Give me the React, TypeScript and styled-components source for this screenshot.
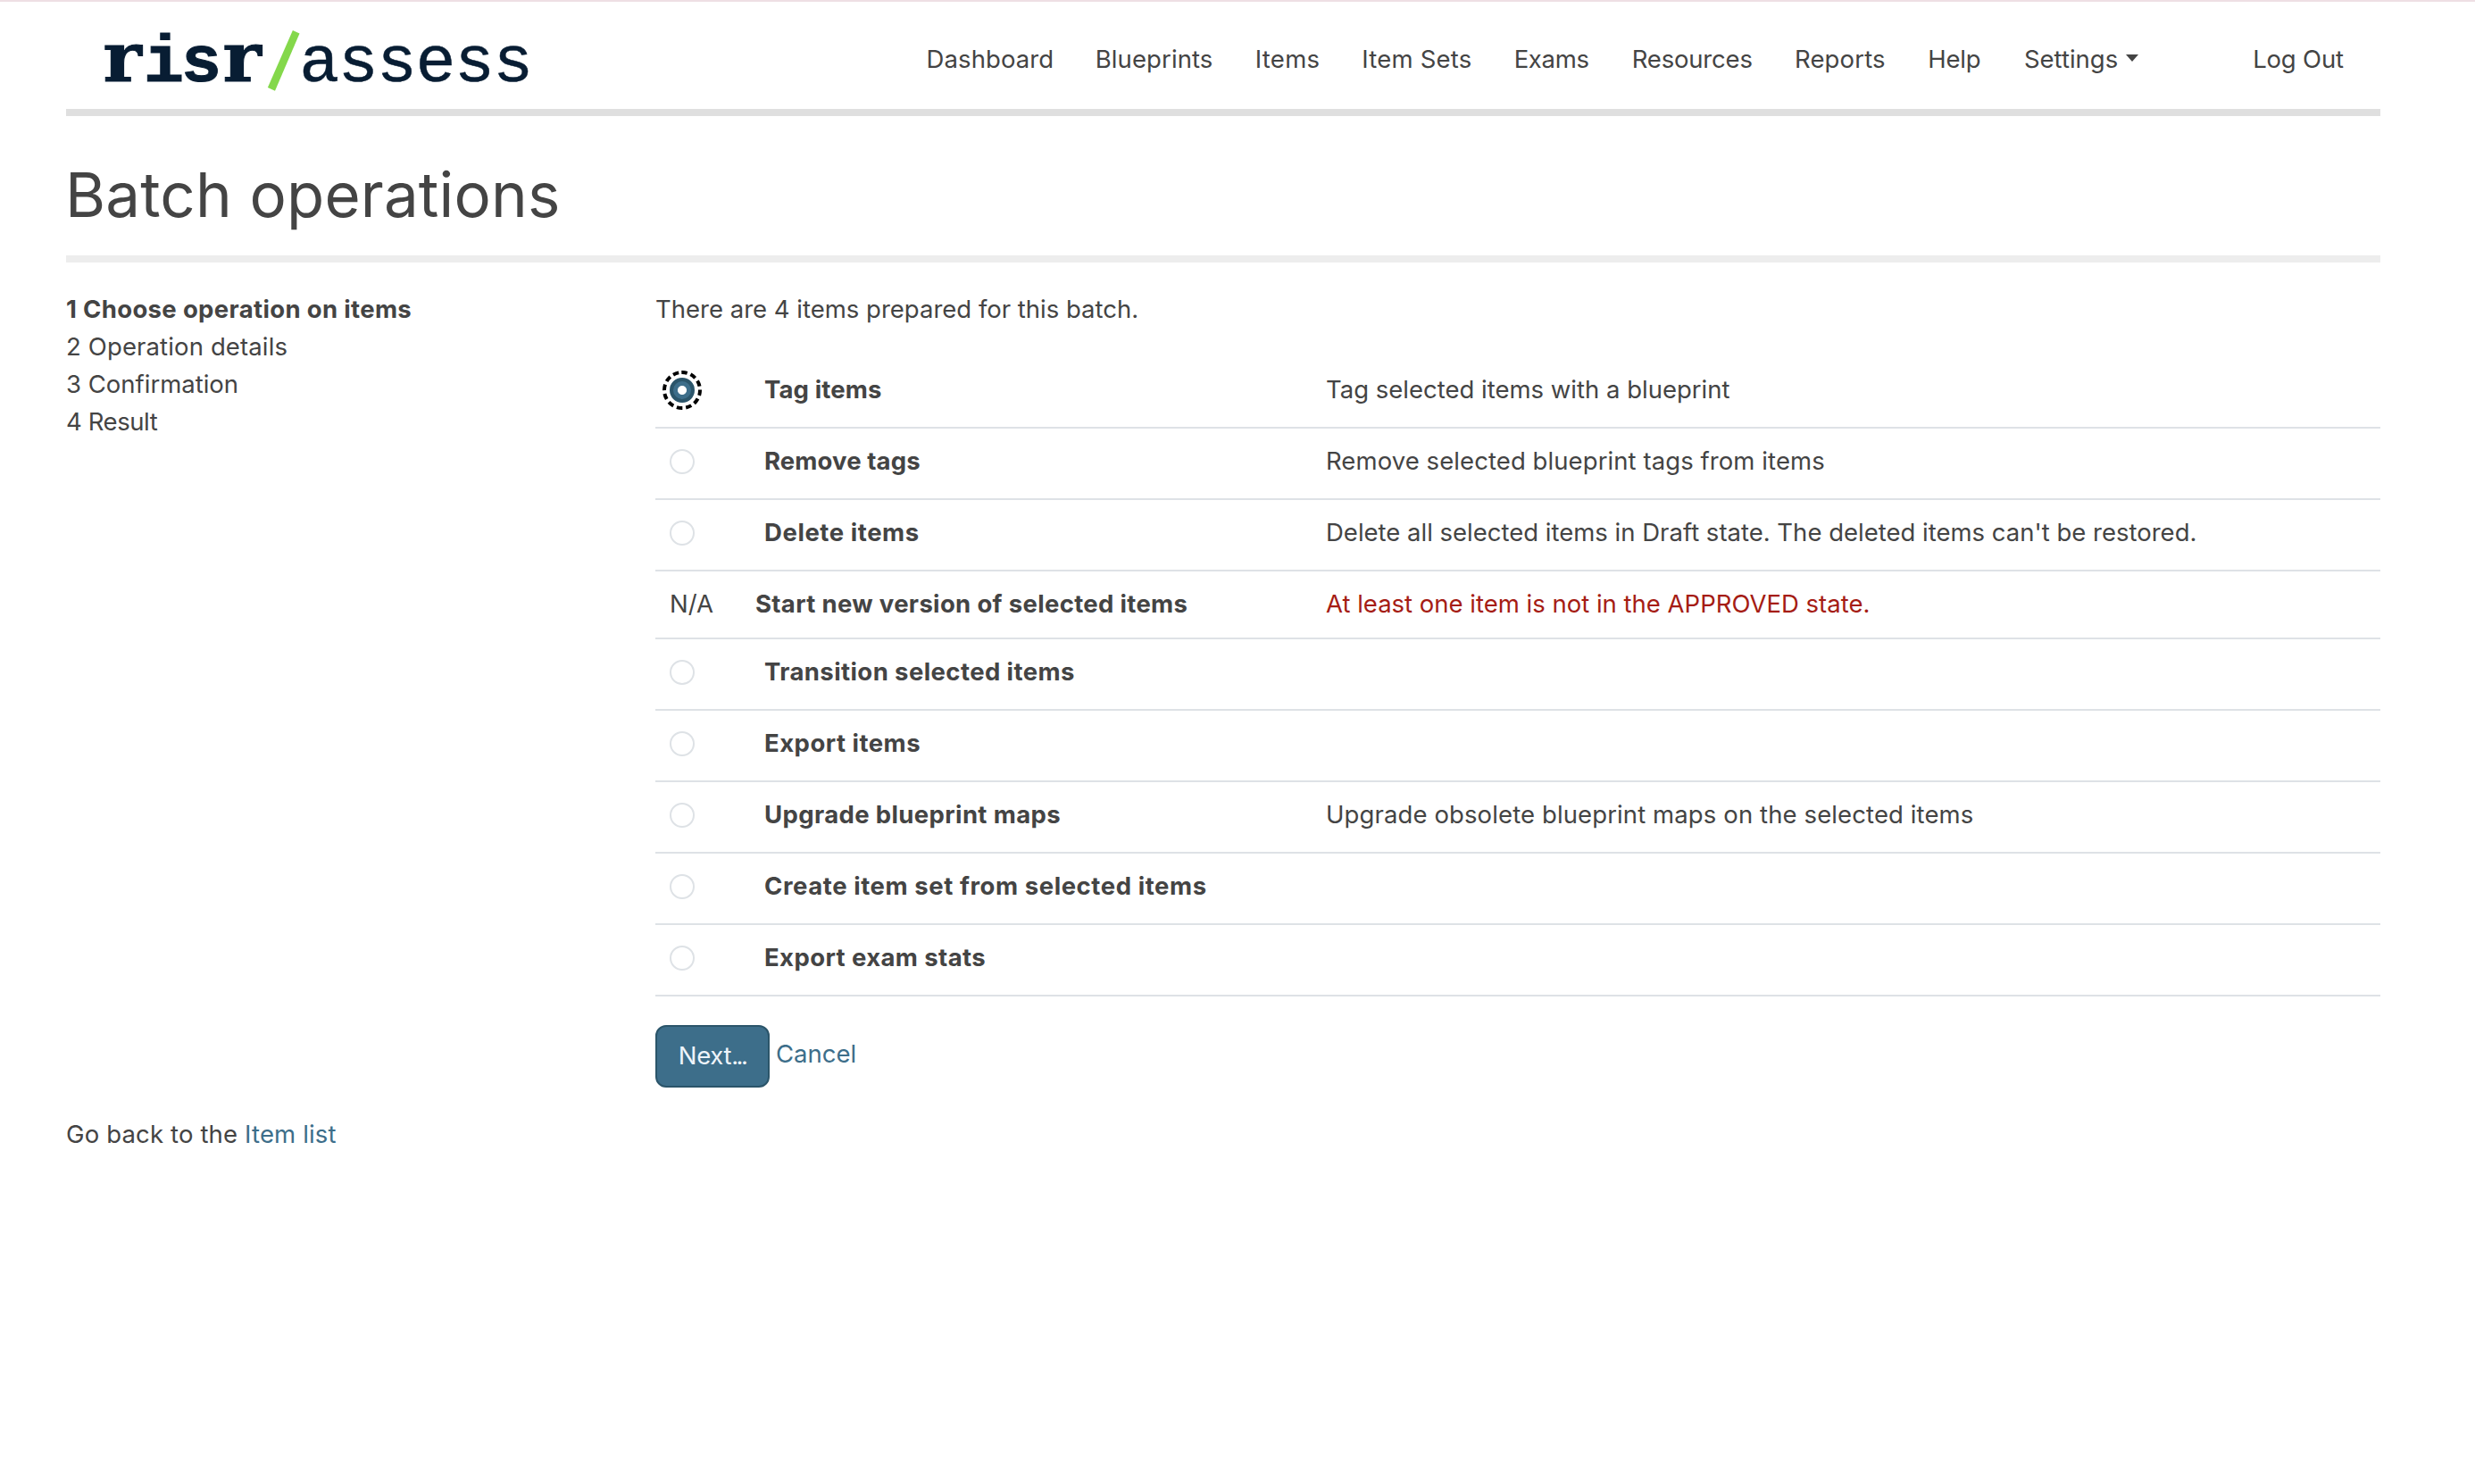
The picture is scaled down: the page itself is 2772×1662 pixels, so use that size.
import React, { useState } from "react";
import styled, { createGlobalStyle } from "styled-components";

const GlobalStyle = createGlobalStyle`
  *, *::before, *::after { box-sizing: border-box; }
  body {
    margin: 0;
    background: #fff;
    color: #444;
    font-family: Inter, "Liberation Sans", sans-serif;
    font-size: 27.5px;
    line-height: 42px;
  }
`;

const Page = styled.div`
  min-height: 1662px;
  border-top: 2px solid #eedfe4;
  padding: 0 106px 0 74px;
`;

const Header = styled.header`
  display: flex;
  height: 128px;
  border-bottom: 8px solid #dfdfdf;
`;

const Logo = styled.svg`
  flex: none;
  width: 560px;
  height: 120px;
  font-family: "Liberation Mono", monospace;
  font-size: 75px;
  fill: #081d33;
`;

const SlabLetter = styled.text`
  font-family: "DejaVu Serif", serif;
  font-size: 76px;
`;

const Nav = styled.nav`
  display: flex;
  padding: 43px 0 0 403.6px;
`;

const NavLink = styled.a<{ $width: number; $track?: number }>`
  flex: none;
  width: ${(p) => p.$width}px;
  letter-spacing: ${(p) => p.$track ?? 0}px;
  white-space: nowrap;
`;

const Caret = styled.span`
  display: inline-block;
  margin-left: 8.4px;
  vertical-align: 7px;
  border-top: 8px solid #444;
  border-left: 7.5px solid transparent;
  border-right: 7.5px solid transparent;
`;

const Title = styled.h1`
  margin: 46px 0 0 -1px;
  padding-bottom: 26px;
  font-size: 69px;
  font-weight: 400;
  line-height: 84px;
  letter-spacing: 0.17px;
`;

const Rule = styled.div`
  height: 8px;
  background: #ededed;
`;

const Columns = styled.main`
  display: grid;
  grid-template-columns: 660px 1fr;
  padding-top: 31px;
`;

const Steps = styled.ol`
  margin: 0;
  padding: 0;
  list-style: none;
`;

const Step = styled.li<{ $current?: boolean; $track: number }>`
  font-weight: ${(p) => (p.$current ? 700 : 400)};
  letter-spacing: ${(p) => p.$track}px;
`;

const Intro = styled.p`
  margin: 0 0 33px;
`;

const Row = styled.div<{ $disabled?: boolean }>`
  display: grid;
  grid-template-columns: ${(p) => (p.$disabled ? "96px 639px 1fr" : "106px 629px 1fr")};
  height: ${(p) => (p.$disabled ? 76 : 80)}px;
  padding: 15px 0 0 16px;
  border-bottom: 2px solid #dee2e6;
  white-space: nowrap;
`;

const Label = styled.label<{ $track: number }>`
  font-weight: 700;
  letter-spacing: ${(p) => p.$track}px;
`;

const Description = styled.span<{ $error?: boolean; $track?: number }>`
  color: ${(p) => (p.$error ? "#a51c14" : "inherit")};
  letter-spacing: ${(p) => p.$track ?? 0}px;
`;

const Radio = styled.button<{ $checked: boolean }>`
  position: relative;
  width: 28px;
  height: 28px;
  margin: 8px 0 0;
  padding: 0;
  border-radius: 50%;
  border: ${(p) => (p.$checked ? "4px solid #2b556a" : "2px solid #dee2e6")};
  background: ${(p) =>
    p.$checked ? "radial-gradient(circle, #fff 4.6px, #3d6e8a 5.4px)" : "#fff"};
  background-origin: border-box;
`;

const FocusRing = styled.svg`
  position: absolute;
  left: -12px;
  top: -12px;
  width: 44px;
  height: 44px;
`;

const Actions = styled.div`
  display: flex;
  align-items: flex-start;
  gap: 7px;
  padding-top: 32px;
`;

const NextButton = styled.button`
  width: 128px;
  height: 70px;
  padding: 0 1px 2px 0;
  border: 2px solid #2b556a;
  border-radius: 12px;
  background: #3d6e8a;
  color: #eef4fa;
  font: inherit;
  letter-spacing: -0.3px;
`;

const Dots = styled.span`
  letter-spacing: -2.6px;
`;

const Link = styled.a`
  color: #3d6e8a;
`;

const CancelLink = styled(Link)`
  margin-top: 11px;
`;

const Footer = styled.footer`
  padding-top: 31px;
  letter-spacing: 0.15px;
`;

const navItems = [
  { text: "Dashboard", width: 189.2, track: 0.09 },
  { text: "Blueprints", width: 178.9, track: 0.09 },
  { text: "Items", width: 119.7, track: 0.32 },
  { text: "Item Sets", width: 170.3, track: 0.2 },
  { text: "Exams", width: 132.1, track: -0.32 },
  { text: "Resources", width: 182.2, track: -0.2 },
  { text: "Reports", width: 149.4, track: 0.17 },
  { text: "Help", width: 107.6, track: -0.24 },
  { text: "Settings", width: 256.3, track: 0, menu: true },
  { text: "Log Out", width: 102, track: -0.2 },
];

const steps = [
  { text: "1 Choose operation on items", track: 0.34 },
  { text: "2 Operation details", track: 0.13 },
  { text: "3 Confirmation", track: 0 },
  { text: "4 Result", track: -0.42 },
];

type Operation = {
  name: string;
  track: number;
  description?: string;
  descriptionTrack?: number;
  disabled?: boolean;
};

const operations: Operation[] = [
  { name: "Tag items", track: 0.12, description: "Tag selected items with a blueprint" },
  { name: "Remove tags", track: 0.12, description: "Remove selected blueprint tags from items", descriptionTrack: 0.08 },
  { name: "Delete items", track: 0.57, description: "Delete all selected items in Draft state. The deleted items can't be restored." },
  { name: "Start new version of selected items", track: 0.33, description: "At least one item is not in the APPROVED state.", disabled: true },
  { name: "Transition selected items", track: 0.41 },
  { name: "Export items", track: 0.48 },
  { name: "Upgrade blueprint maps", track: 0.37, description: "Upgrade obsolete blueprint maps on the selected items", descriptionTrack: 0.11 },
  { name: "Create item set from selected items", track: 0.57 },
  { name: "Export exam stats", track: 0.4 },
];

const RisrLogo = () => (
  <Logo viewBox="74 2 560 120" role="img" aria-label="risr/assess">
    <g fontWeight="700" stroke="#081d33" strokeWidth="1">
      <SlabLetter transform="translate(115.5 90.5) scale(1.08 1)">r</SlabLetter>
      <text x="161" y="90.5">i</text>
      <text x="203" y="90.5">s</text>
      <SlabLetter transform="translate(249.4 90.5) scale(1.08 1)">r</SlabLetter>
    </g>
    <polygon points="327.9,34 335.5,37.5 308,101.7 299.9,98" fill="#84d84b" />
    <text x="335.3" y="90.5" letterSpacing="-1.6" stroke="#081d33" strokeWidth="0.5">assess</text>
  </Logo>
);

export default function App() {
  const [selected, setSelected] = useState(0);
  return (
    <Page>
      <GlobalStyle />
      <Header>
        <RisrLogo />
        <Nav>
          {navItems.map((item) => (
            <NavLink key={item.text} $width={item.width} $track={item.track}>
              {item.text}
              {item.menu && <Caret />}
            </NavLink>
          ))}
        </Nav>
      </Header>
      <Title>Batch operations</Title>
      <Rule />
      <Columns>
        <Steps>
          {steps.map((step, i) => (
            <Step key={step.text} $current={i === 0} $track={step.track}>
              {step.text}
            </Step>
          ))}
        </Steps>
        <section>
          <Intro>There are 4 items prepared for this batch.</Intro>
          {operations.map((op, i) => (
            <Row key={op.name} $disabled={op.disabled}>
              {op.disabled ? (
                <span>N/A</span>
              ) : (
                <Radio
                  role="radio"
                  aria-checked={selected === i}
                  $checked={selected === i}
                  onClick={() => setSelected(i)}
                >
                  {selected === i && (
                    <FocusRing viewBox="-22 -22 44 44">
                      <circle
                        r="20"
                        fill="none"
                        stroke="#000"
                        strokeWidth="4"
                        strokeDasharray="6.47 4"
                        transform="rotate(-92)"
                      />
                    </FocusRing>
                  )}
                </Radio>
              )}
              <Label $track={op.track}>{op.name}</Label>
              <Description $error={op.disabled} $track={op.descriptionTrack}>
                {op.description}
              </Description>
            </Row>
          ))}
          <Actions>
            <NextButton>
              Next<Dots>...</Dots>
            </NextButton>
            <CancelLink>Cancel</CancelLink>
          </Actions>
        </section>
      </Columns>
      <Footer>
        Go back to the <Link>Item list</Link>
      </Footer>
    </Page>
  );
}
